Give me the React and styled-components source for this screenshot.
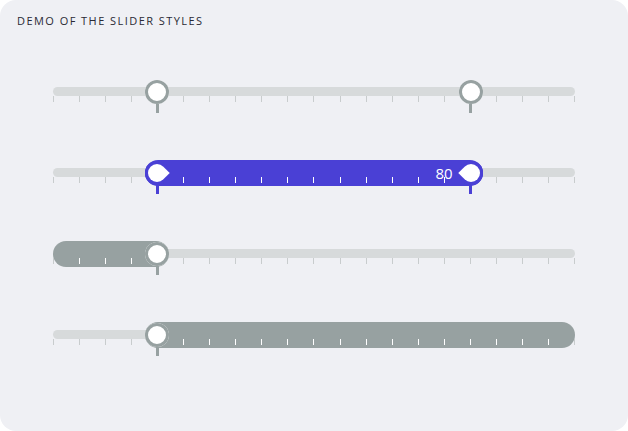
import React from 'react';
import styled, { createGlobalStyle } from 'styled-components';

const GREY = '#97a1a1';
const INDIGO = '#4a40d5';
const TRACK = '#d7dadb';

const GlobalStyle = createGlobalStyle`
  body {
    margin: 0;
    background: #fff;
    font-family: "Open Sans", "Liberation Sans", sans-serif;
  }
`;

const Card = styled.div`
  width: 628px;
  height: 431px;
  box-sizing: border-box;
  background: #eff0f4;
  border-radius: 16px;
  overflow: hidden;
`;

const Title = styled.h1`
  margin: 0;
  padding: 13px 17px 0;
  font-size: 11px;
  line-height: 16px;
  font-weight: 400;
  letter-spacing: 1.45px;
  color: #2a2a35;
`;

const SliderList = styled.div`
  display: grid;
  row-gap: 55px;
  padding: 50px 53px 0;
`;

const SliderRow = styled.div`
  position: relative;
  height: 26px;
`;

const Track = styled.div`
  height: 9px;
  margin-top: 8px;
  border-radius: 5px;
  background: ${TRACK};
`;

const Ticks = styled.div`
  position: relative;
  z-index: 1;
  display: flex;
  justify-content: space-between;
  height: 6px;
`;

const Tick = styled.span`
  width: 1px;
  background: ${({ $active }) => ($active ? '#fff' : '#c8cccd')};
`;

const Fill = styled.div`
  position: absolute;
  top: 0;
  height: 26px;
  border-radius: 13px;
  background: ${({ $color }) => $color};
`;

const Thumb = styled.div`
  position: absolute;
  z-index: 2;
  top: 1px;
  width: 24px;
  height: 24px;
  margin-left: -12px;
  border-radius: 50%;
  display: grid;
  place-items: center;
  background: ${({ $drop, $color }) => ($drop ? $color : '#fff')};
  box-shadow: inset 0 0 0 3px ${({ $color }) => $color};

  &::after {
    content: '';
    position: absolute;
    top: 100%;
    left: 50%;
    margin-left: -1.5px;
    width: 3px;
    height: 9px;
    background: ${({ $color }) => $color};
  }
`;

const Drop = styled.span`
  width: 18px;
  height: 18px;
  background: #fff;
  transform: rotate(45deg);
  border-radius: ${({ $point }) => ($point === 'right' ? '50% 0 50% 50%' : '50% 50% 50% 0')};
`;

const ValueLabel = styled.span`
  position: absolute;
  z-index: 2;
  top: 0;
  line-height: 26px;
  font-size: 15px;
  color: #fff;
  transform: translateX(-100%);
`;

const sliders = [
  { values: [20, 80], variant: 'plain' },
  { values: [20, 80], variant: 'range', fill: [20, 80], label: 80 },
  { values: [20], variant: 'lower', fill: [0, 20] },
  { values: [20], variant: 'upper', fill: [20, 100] },
];

const TICKS = Array.from({ length: 21 }, (_, i) => i * 5);
const WIDTH = 522;
const PAD = 12;

const Slider = ({ values, variant, fill, label }) => {
  const color = variant === 'range' ? INDIGO : GREY;
  const isRange = variant === 'range';

  let fillStyle = null;
  let fillFrom = -1;
  let fillTo = -1;
  if (fill) {
    const [a, b] = fill;
    const left = a === 0 ? '0px' : `calc(${a}% - ${PAD}px)`;
    const right = b === 100 ? '0px' : `calc(${100 - b}% - ${PAD}px)`;
    fillStyle = { left, right };
    fillFrom = a === 0 ? 0 : (a / 100) * WIDTH - PAD;
    fillTo = b === 100 ? WIDTH : (b / 100) * WIDTH + PAD;
  }

  return (
    <SliderRow>
      <Track />
      <Ticks>
        {TICKS.map((t) => {
          const x = (t / 100) * WIDTH;
          return <Tick key={t} $active={x > fillFrom + 2 && x < fillTo - 2} />;
        })}
      </Ticks>
      {fill && <Fill $color={color} style={fillStyle} />}
      {values.map((v, i) => (
        <Thumb key={v} $color={color} $drop={isRange} style={{ left: `${v}%` }}>
          {isRange && <Drop $point={i === 0 ? 'right' : 'left'} />}
        </Thumb>
      ))}
      {label != null && (
        <ValueLabel style={{ left: `calc(${label}% - 18px)` }}>{label}</ValueLabel>
      )}
    </SliderRow>
  );
};

const App = () => (
  <Card>
    <GlobalStyle />
    <Title>DEMO OF THE SLIDER STYLES</Title>
    <SliderList>
      {sliders.map((s, i) => (
        <Slider key={i} {...s} />
      ))}
    </SliderList>
  </Card>
);

export default App;
